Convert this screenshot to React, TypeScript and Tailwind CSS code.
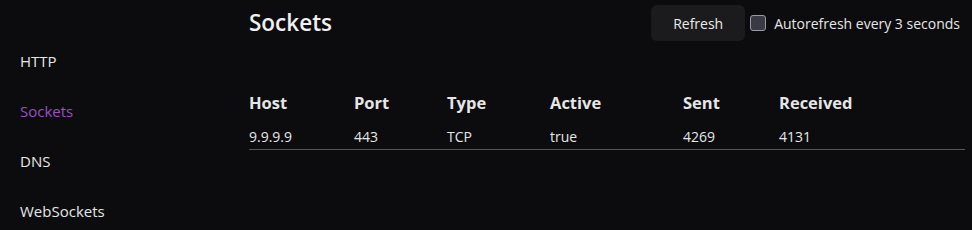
import { useState } from 'react';

const NAV = ['HTTP', 'Sockets', 'DNS', 'WebSockets'];

const COLUMNS = [
  { key: 'host', title: 'Host', width: 'w-[105px]' },
  { key: 'port', title: 'Port', width: 'w-[93px]' },
  { key: 'type', title: 'Type', width: 'w-[103px]' },
  { key: 'active', title: 'Active', width: 'w-[133px]' },
  { key: 'sent', title: 'Sent', width: 'w-[96px]' },
  { key: 'received', title: 'Received', width: '' },
];

const ROWS = [{ host: '9.9.9.9', port: '443', type: 'TCP', active: 'true', sent: '4269', received: '4131' }];

export default function App() {
  const [auto, setAuto] = useState(false);

  return (
    <div className="flex h-[230px] w-[972px] overflow-hidden bg-[#0c0c0e] font-['Open_Sans',sans-serif] text-[#e6e6e6]">
      {/* Sidebar */}
      <nav className="flex w-[249px] shrink-0 flex-col gap-[29px] pl-5 pt-[51px] text-[15px]">
        {NAV.map((item) => (
          <a key={item} className={`leading-[21px] ${item === 'Sockets' ? 'text-[#9b4fc0]' : ''}`}>
            {item}
          </a>
        ))}
      </nav>

      {/* Main */}
      <main className="min-w-0 flex-1 pr-[7px]">
        <div className="flex items-start justify-between pr-[5px] pt-[5px]">
          <h1 className="pt-[4px] text-[22.5px] font-semibold leading-[28px] text-[#f0f0f0]">Sockets</h1>
          <div className="flex items-center gap-[5px]">
            <button
              type="button"
              className="h-9 w-[94px] rounded-md bg-[#1b1b1e] text-[14px] font-medium text-[#ececec]"
            >
              Refresh
            </button>
            <label className="flex items-center gap-2 text-[14px]">
              <input
                type="checkbox"
                checked={auto}
                onChange={(e) => setAuto(e.target.checked)}
                className="h-4 w-4 appearance-none rounded-[3px] border border-[#9a9aa2] bg-[#3a3a44]"
              />
              Autorefresh every 3 seconds
            </label>
          </div>
        </div>

        <table className="mt-[50px] w-full border-collapse text-left">
          <thead>
            <tr>
              {COLUMNS.map((c) => (
                <th key={c.key} className={`${c.width} pb-[12px] text-[16.5px] font-bold leading-6`}>
                  {c.title}
                </th>
              ))}
            </tr>
          </thead>
          <tbody>
            {ROWS.map((r) => (
              <tr key={r.host} className="border-b border-[#55555a]">
                {COLUMNS.map((c) => (
                  <td key={c.key} className="pb-[2px] text-[14px] leading-5">
                    {r[c.key as keyof typeof r]}
                  </td>
                ))}
              </tr>
            ))}
          </tbody>
        </table>
      </main>
    </div>
  );
}
